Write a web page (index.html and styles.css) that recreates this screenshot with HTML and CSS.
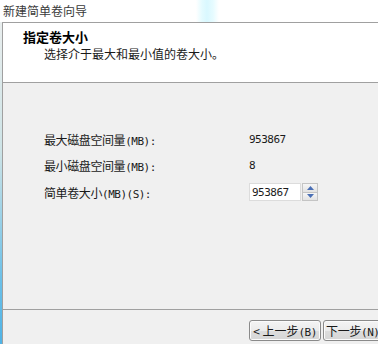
FILE: index.html
```html
<!DOCTYPE html>
<html lang="zh-CN">
<head>
  <meta charset="UTF-8" />
  <title>新建简单卷向导</title>
  <link rel="stylesheet" href="styles.css">
</head>
<body>
  <div class="titlebar">新建简单卷向导</div>

  <div class="frame">
    <div class="edge"></div>
    <div class="dialog">
      <div class="header">
        <h1>指定卷大小</h1>
        <p>选择介于最大和最小值的卷大小。</p>
      </div>

      <div class="content">
        <div class="fields">
          <span class="label">最大磁盘空间量<span class="latin">(MB):</span></span>
          <span class="value">953867</span>

          <span class="label">最小磁盘空间量<span class="latin">(MB):</span></span>
          <span class="value">8</span>

          <span class="label">简单卷大小<span class="latin">(MB)(S):</span></span>
          <div class="spinner">
            <input type="text" value="953867">
            <div class="spin-buttons">
              <span class="spin up"><svg width="7" height="4" viewBox="0 0 7 4"><path d="M0 4 L3.5 0 L7 4 Z" fill="#4a6fb5"/></svg></span>
              <span class="spin down"><svg width="7" height="4" viewBox="0 0 7 4"><path d="M0 0 L3.5 4 L7 0 Z" fill="#4a6fb5"/></svg></span>
            </div>
          </div>
        </div>
      </div>

      <div class="footer">
        <button>&lt; 上一步<span class="latin">(B)</span></button>
        <button class="next">下一步<span class="latin">(N)</span></button>
      </div>
    </div>
  </div>
</body>
</html>
```

FILE: styles.css
```css
* {
  box-sizing: border-box;
}

html, body {
  height: 100%;
}

body {
  margin: 0;
  font-family: "Noto Sans CJK SC", "Liberation Sans", sans-serif;
  font-size: 12px;
  color: #1a1a1a;
  background: #ffffff;
  display: flex;
  flex-direction: column;
  overflow: hidden;
}

.titlebar {
  height: 22px;
  line-height: 22px;
  padding-left: 3px;
  color: #3a3a3a;
  background: linear-gradient(90deg, #ffffff 0, #ffffff 196px, #e4fbff 202px, #d9f8ff 207px, #e6fbff 213px, #ffffff 219px, #ffffff 100%);
}

.frame {
  flex: 1;
  display: flex;
}

.edge {
  width: 2px;
  background: linear-gradient(180deg, #e9eeee 0, #cde3e6 40%, #6cc0e8 80%, #4fb3e6 100%);
}

.dialog {
  flex: 1;
  display: flex;
  flex-direction: column;
  border-left: 1px solid #a0a0a0;
  border-top: 1px solid #a0a0a0;
  min-width: 0;
}

.header {
  height: 60px;
  background: #ffffff;
  padding: 6px 0 0 20px;
  border-bottom: 1px solid #a0a0a0;
  box-shadow: 0 1px 0 #e0e0e0;
}

.header h1 {
  margin: 0;
  font-size: 13px;
  line-height: 16px;
  font-weight: bold;
  color: #000000;
}

.header p {
  margin: 1px 0 0;
  padding-left: 21px;
  font-size: 12px;
  line-height: 15px;
  color: #1a1a1a;
}

.content {
  flex: 1;
  background: #f0f0f0;
  padding: 43px 0 0 41px;
  border-bottom: 1px solid #a0a0a0;
  box-shadow: 0 1px 0 #ffffff;
}

.fields {
  display: grid;
  grid-template-columns: 205px auto;
  grid-template-rows: 26px 27px 26px;
  align-items: center;
}

.label {
  font-size: 12px;
  letter-spacing: -0.4px;
}

.latin, .value, .spinner input {
  font-family: "DejaVu Sans Mono", "Liberation Mono", monospace;
  font-size: 11px;
  letter-spacing: -0.5px;
}

.spinner {
  display: flex;
  align-items: stretch;
  height: 18px;
}

.spinner input {
  width: 52px;
  height: 18px;
  padding: 0 2px;
  border: 1px solid #dcdcdc;
  background: #ffffff;
  color: #1a1a1a;
  outline: none;
}

.spin-buttons {
  display: flex;
  flex-direction: column;
  width: 16px;
  margin-left: 1px;
  border: 1px solid #c4c4c4;
}

.spin {
  flex: 1;
  display: flex;
  align-items: center;
  justify-content: center;
  background: linear-gradient(180deg, #f6f6f6, #e2e2e2);
}

.spin.up {
  border-bottom: 1px solid #c4c4c4;
}

.footer {
  height: 34px;
  background: #f0f0f0;
  display: flex;
  align-items: flex-start;
  gap: 2px;
  padding: 10px 0 0 246px;
  overflow: hidden;
}

.footer button {
  flex: none;
  width: 72px;
  height: 21px;
  padding: 0;
  font-family: "Noto Sans CJK SC", "Liberation Sans", sans-serif;
  font-size: 12px;
  color: #1a1a1a;
  border: 1px solid #8a8a8a;
  border-radius: 3px;
  background: linear-gradient(180deg, #f4f4f4 0, #ebebeb 50%, #dddddd 51%, #d6d6d6 100%);
  box-shadow: inset 0 0 0 1px #fbfbfb;
}

.footer .next {
  text-align: left;
  padding-left: 2px;
  letter-spacing: -0.3px;
}
```
